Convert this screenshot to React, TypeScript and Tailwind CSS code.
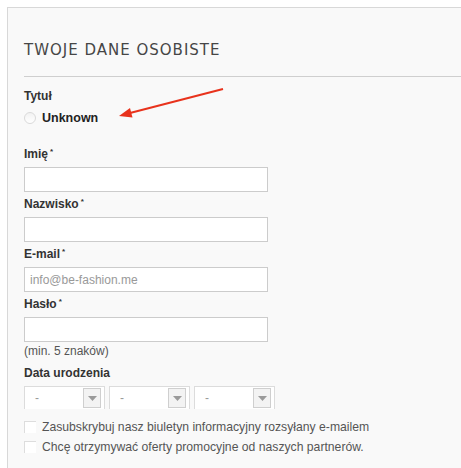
import React from 'react'

const fields = [
  { label: 'Imię', placeholder: '' },
  { label: 'Nazwisko', placeholder: '' },
  { label: 'E-mail', placeholder: 'info@be-fashion.me' },
  { label: 'Hasło', placeholder: '' },
]

const SelectBox = () => (
  <div className="flex h-[23px] w-[81px] items-center border-l border-r border-t border-[#dcdcdc] bg-white pl-[10px] pr-[3px]">
    <span className="flex-1 text-[12px] leading-none text-[#999]">-</span>
    <div className="flex h-[20px] w-[18px] items-center justify-center border border-[#cfcfcf] bg-[#f3f3f3]">
      <svg width="9" height="5" viewBox="0 0 9 5">
        <path d="M0 0 L9 0 L4.5 5 Z" fill="#9a9a9a" />
      </svg>
    </div>
  </div>
)

const App = () => {
  return (
    <div className="relative h-[468px] w-[461px] overflow-hidden bg-white pl-[7px] pt-[7px] font-['Liberation_Sans',Arial,sans-serif]">
      <div className="h-full border-l border-t border-[#d8d8d8] bg-[#f9f9f9] pl-[16px]">
        <h1 className="mt-[33px] text-[15px] leading-[18px] tracking-[1px] text-[#464646] font-['DejaVu_Sans',sans-serif]">
          TWOJE DANE OSOBISTE
        </h1>
        <div className="mt-[17px] h-px bg-[#cfcfcf]" />

        <div className="mt-[12px] text-[12px] font-bold leading-[14px] text-[#333]">Tytuł</div>
        <label className="mt-[8px] flex items-center gap-[6px] text-[12.5px] font-bold leading-[14px] text-[#222]">
          <span className="h-[12px] w-[12px] rounded-full border border-[#dadada] bg-gradient-to-b from-[#f2f2f2] to-white" />
          Unknown
        </label>

        <div className="mt-[22px] flex w-[244px] flex-col gap-[5px]">
          {fields.map((f) => (
            <div key={f.label} className="flex flex-col gap-[6px]">
              <div className="text-[12px] font-bold leading-[14px] text-[#333]">
                {f.label}
                <sup className="ml-[2px] text-[8px] text-[#333]">*</sup>
              </div>
              <div className="flex h-[25px] items-center border border-[#cccccc] bg-white px-[5px] text-[12px] text-[#999]">
                {f.placeholder}
              </div>
            </div>
          ))}
        </div>

        <div className="mt-[2px] text-[12px] leading-[14px] text-[#555]">(min. 5 znaków)</div>
        <div className="mt-[8px] text-[12px] font-bold leading-[14px] text-[#333]">Data urodzenia</div>

        <div className="mt-[6px] flex gap-[4px]">
          <SelectBox />
          <SelectBox />
          <SelectBox />
        </div>

        <div className="mt-[12px] flex flex-col gap-[8px]">
          {[
            'Zasubskrybuj nasz biuletyn informacyjny rozsyłany e-mailem',
            'Chcę otrzymywać oferty promocyjne od naszych partnerów.',
          ].map((t) => (
            <label key={t} className="flex items-center gap-[6px] text-[12.2px] leading-[12px] text-[#555]">
              <span className="h-[12px] w-[12px] border-l border-t border-[#dddddd] bg-white" />
              {t}
            </label>
          ))}
        </div>
      </div>

      {/* red arrow pointing at the radio */}
      <svg className="absolute left-0 top-0" width="461" height="468" viewBox="0 0 461 468">
        <line x1="223" y1="89" x2="130" y2="113" stroke="#e8321c" strokeWidth="2" />
        <path d="M119 116 L130 108 L132.5 117.5 Z" fill="#e8321c" />
      </svg>
    </div>
  )
}

export default App
